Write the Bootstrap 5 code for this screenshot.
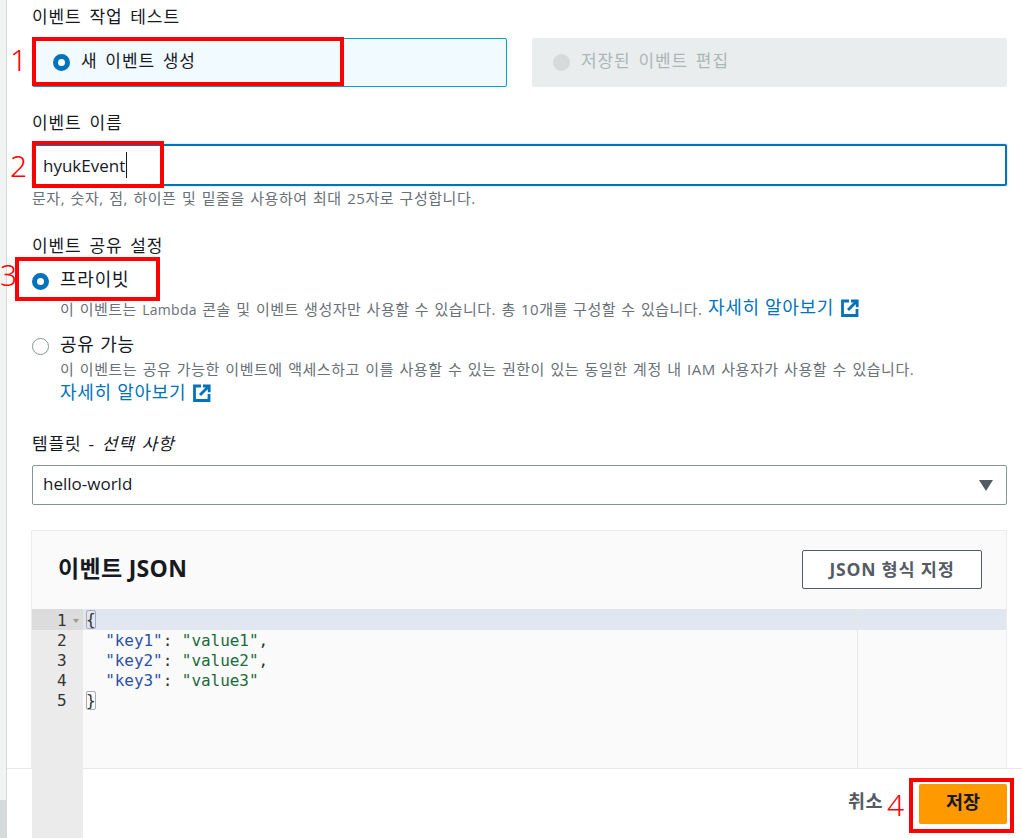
<!DOCTYPE html>
<html lang="ko">
<head>
<meta charset="utf-8">
<title>이벤트 작업 테스트</title>
<link href="https://cdn.jsdelivr.net/npm/bootstrap@5.3.0/dist/css/bootstrap.min.css" rel="stylesheet">
<style>
html,body{height:100%;overflow:hidden;}
body{font-family:"Open Sans","Noto Sans CJK KR",sans-serif;font-size:17px;color:#16191f;background:#fff;}
.shell{height:838px;position:relative;overflow:hidden;}
.rail{width:7px;flex:none;background:linear-gradient(#f2f3f3 800px,#d5dbdb 800px);border-right:1px solid #d5dbdb;}
.pane{padding-left:25px;padding-right:15px;width:1016px;min-width:0;}
.fld-label{display:block;font-size:17px;line-height:24px;letter-spacing:.9px;word-spacing:2.5px;color:#16191f;margin:0;}
.tpl-label{word-spacing:1.5px;}
.ko{letter-spacing:.9px;word-spacing:2.5px;}
.tiles{display:flex;gap:25px;margin-top:9px;}
.tile{flex:1 1 0;height:49px;border:1px solid #00a1c9;border-radius:2px;background:#f1faff;display:flex;align-items:center;padding-left:20px;gap:11px;}
.tile .ko{position:relative;top:-2px;}
.tile-off{background:#eaeded;border-color:#eaeded;color:#aab7b8;}
.dot{width:17px;height:17px;flex:none;margin:0;border-radius:50%!important;background:#fff!important;background-image:none!important;border:1px solid #879596;box-shadow:none!important;}
.dot:checked{border:5.5px solid #0073bb;}
.dot:disabled{opacity:1;background:#d5dbdb!important;border-color:#d5dbdb;}
.name-in{height:42px;border:2px solid #0073bb;border-radius:2px;box-shadow:0 0 0 1px #a9d3ec55;padding:0 9px;font-size:17px;color:#16191f;margin-top:9px;}
.hint{font-size:15px;line-height:20px;color:#687078;letter-spacing:.55px;word-spacing:1px;}
.hint-a{letter-spacing:.48px;}
.lat{font-size:14px;letter-spacing:.3px;}
.opt{display:flex;gap:11px;}
.opt-title{font-size:18px;line-height:24px;letter-spacing:.8px;word-spacing:0;}
.learn{color:#0073bb;font-size:18px;text-decoration:none;letter-spacing:.7px;word-spacing:0;}
.learn-up{position:relative;top:-1px;}
.ext{width:18px;height:18px;vertical-align:-3px;margin-left:7px;}
.tpl{height:40px;border:1px solid #879596;border-radius:2px;font-size:17px;color:#16191f;padding:0 10px 2px;margin-top:9px;background-image:none;}
.pick{position:relative;}
.caret{position:absolute;right:14px;top:15px;width:0;height:0;border-left:7px solid transparent;border-right:7px solid transparent;border-top:11px solid #545b64;pointer-events:none;}
.json-card{margin-top:25px;margin-left:-1px;border:1px solid #eaeded;border-radius:0;background:#fafafa;height:330px;overflow:visible;}
.json-head{height:78px;padding:19px 24px 0 26px;display:flex;justify-content:space-between;}
.json-title{font-size:23px;font-weight:700;line-height:36px;margin:0;letter-spacing:.3px;}
.fmt-btn{width:180px;height:39px;border:1px solid #545b64;border-radius:2px;background:#fff;color:#545b64;font-size:17.5px;font-weight:700;padding:0;letter-spacing:.8px;}
.editor{display:flex;position:relative;height:230px;font-family:"DejaVu Sans Mono",monospace;font-size:16px;line-height:22px;}
.gutter{width:51px;flex:none;background:#ebebeb;height:300px;color:#333;position:relative;z-index:3;}
.gut-row{height:20px;padding-left:25px;padding-top:2px;display:flex;align-items:center;gap:6px;}
.gut-on{background:#dcdcdc;height:21px;}
.gut-on i{width:0;height:0;border-left:3px solid transparent;border-right:3px solid transparent;border-top:4px solid #999;}
.code{flex:1;position:relative;}
.ln{height:20px;white-space:pre;padding-left:3px;color:#333;letter-spacing:-.05px;}
.ln-on{background:#e0e7f0;height:21px;}
.ok{color:#2a52a5;}
.sv{color:#1c6b3c;}
.br{outline:1px solid #a7a7c0;outline-offset:-1px;border-radius:2px;}
.margin-line{position:absolute;left:774px;top:0;bottom:0;width:1px;background:#e5e7e8;}
.foot{position:absolute;left:7px;right:0;bottom:0;height:70px;background:#fff;border-top:1px solid #e5e7e8;display:flex;justify-content:flex-end;align-items:center;z-index:2;padding:0 15px 0 0;gap:36px;}
.cancel{font-size:18.5px;font-weight:700;color:#545b64;letter-spacing:.5px;margin-top:-5px;}
.save{width:88px;height:40px;background:#f90;border:0;border-radius:2px;color:#16191f;font-weight:700;font-size:18.5px;padding:0 0 4px;}
.redbox{position:absolute;border:4px solid #f00;z-index:5;pointer-events:none;}
.num{position:absolute;color:#f00;font-family:"Noto Sans",sans-serif;font-weight:300;font-size:30px;line-height:30px;z-index:5;}
.rb1{left:32px;top:37px;width:312px;height:49px;}
.rb2{left:32px;top:141px;width:132px;height:47px;}
.rb3{left:15px;top:257px;width:145px;height:44px;}
.rb4{left:909px;top:778px;width:105px;height:55px;}
.n1{left:10px;top:45px;}.n2{left:10px;top:151px;}.n3{left:0;top:260px;}.n4{left:887px;top:790px;}
.cursor{position:absolute;left:126px;top:152px;width:1px;height:26px;background:#16191f;z-index:4;}
</style>
</head>
<body>
<div class="shell d-flex">
  <div class="rail"></div>
  <main class="pane">
    <label class="fld-label" style="margin-top:5px">이벤트 작업 테스트</label>
    <div class="tiles">
      <div class="tile"><input class="form-check-input dot" type="radio" name="mode" checked aria-label="새 이벤트 생성"><span class="ko">새 이벤트 생성</span></div>
      <div class="tile tile-off"><input class="form-check-input dot" type="radio" name="mode" disabled aria-label="저장된 이벤트 편집"><span class="ko">저장된 이벤트 편집</span></div>
    </div>

    <label class="fld-label" style="margin-top:24px">이벤트 이름</label>
    <input class="form-control name-in" type="text" value="hyukEvent" aria-label="이벤트 이름">
    <div class="hint" style="margin-top:2px">문자, 숫자, 점, 하이픈 및 밑줄을 사용하여 최대 25자로 구성합니다.</div>

    <label class="fld-label" style="margin-top:26px">이벤트 공유 설정</label>
    <div class="opt">
      <input class="form-check-input dot" type="radio" name="share" checked aria-label="프라이빗" style="margin-top:15px">
      <div>
        <div class="opt-title" style="margin-top:9px">프라이빗</div>
        <div class="hint hint-a" style="margin-top:7px">이 이벤트는 <span class="lat">Lambda</span> 콘솔 및 이벤트 생성자만 사용할 수 있습니다. 총 10개를 구성할 수 있습니다. <a class="learn learn-up" href="#">자세히 알아보기<svg class="ext" viewBox="0 0 18 18" fill="none" stroke="#0073bb" stroke-width="2.8"><path d="M8 2H1.5v14.5H16V10"/><path d="M7 11 15.5 2.5"/><path d="M10 2h6.2v6.2"/></svg></a></div>
      </div>
    </div>
    <div class="opt" style="margin-top:12px">
      <input class="form-check-input dot" type="radio" name="share" aria-label="공유 가능" style="margin-top:6px">
      <div>
        <div class="opt-title">공유 가능</div>
        <div class="hint" style="margin-top:3px">이 이벤트는 공유 가능한 이벤트에 액세스하고 이를 사용할 수 있는 권한이 있는 동일한 계정 내 IAM 사용자가 사용할 수 있습니다.</div>
        <div style="line-height:24px;margin-top:1px"><a class="learn" href="#">자세히 알아보기<svg class="ext" viewBox="0 0 18 18" fill="none" stroke="#0073bb" stroke-width="2.8"><path d="M8 2H1.5v14.5H16V10"/><path d="M7 11 15.5 2.5"/><path d="M10 2h6.2v6.2"/></svg></a></div>
      </div>
    </div>

    <label class="fld-label tpl-label" style="margin-top:27px">템플릿 - <em>선택 사항</em></label>
    <div class="pick">
      <select class="form-select tpl" aria-label="템플릿"><option>hello-world</option></select>
      <span class="caret"></span>
    </div>

    <section class="card json-card">
      <div class="json-head">
        <h2 class="json-title">이벤트 JSON</h2>
        <button class="btn fmt-btn" type="button">JSON 형식 지정</button>
      </div>
      <div class="editor">
        <div class="gutter">
          <div class="gut-row gut-on">1<i></i></div>
          <div class="gut-row">2</div>
          <div class="gut-row">3</div>
          <div class="gut-row">4</div>
          <div class="gut-row">5</div>
        </div>
        <div class="code">
          <div class="ln ln-on"><span class="br">{</span></div>
          <div class="ln">  <span class="ok">"key1"</span>: <span class="sv">"value1"</span>,</div>
          <div class="ln">  <span class="ok">"key2"</span>: <span class="sv">"value2"</span>,</div>
          <div class="ln">  <span class="ok">"key3"</span>: <span class="sv">"value3"</span></div>
          <div class="ln"><span class="br">}</span></div>
          <span class="margin-line"></span>
        </div>
      </div>
    </section>
  </main>

  <footer class="foot">
    <span class="cancel">취소</span>
    <button class="btn save" type="button">저장</button>
  </footer>

  <span class="cursor"></span>
  <span class="redbox rb1"></span><span class="redbox rb2"></span><span class="redbox rb3"></span><span class="redbox rb4"></span>
  <span class="num n1">1</span><span class="num n2">2</span><span class="num n3">3</span><span class="num n4">4</span>
</div>
<script src="https://cdn.jsdelivr.net/npm/bootstrap@5.3.0/dist/js/bootstrap.bundle.min.js"></script>
</body>
</html>
